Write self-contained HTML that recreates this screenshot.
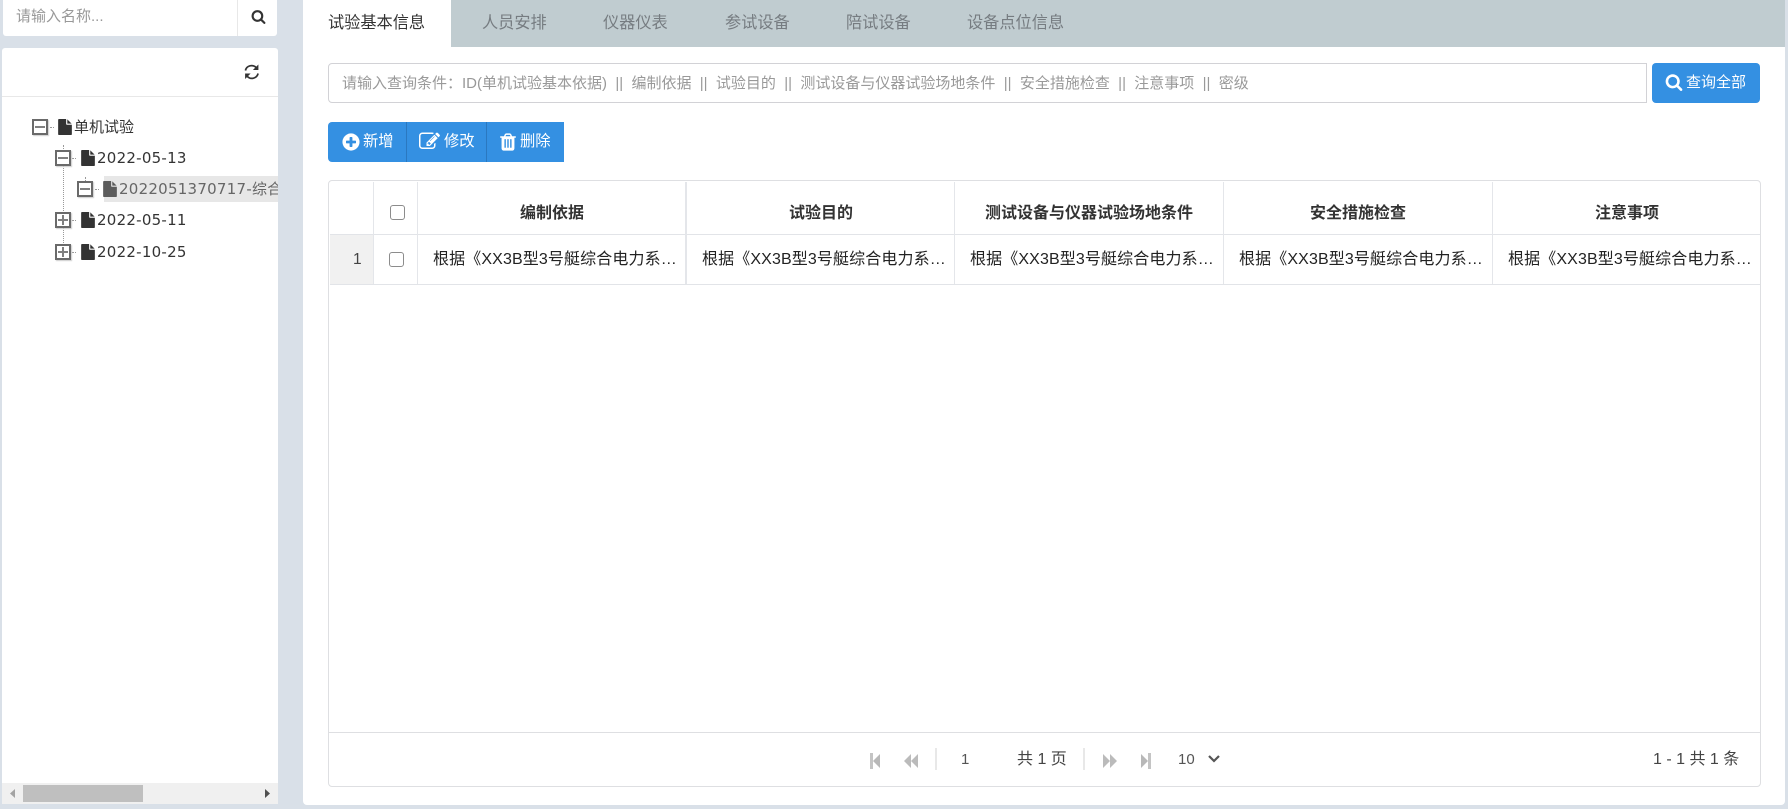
<!DOCTYPE html>
<html><head><meta charset="utf-8"><style>
*{box-sizing:border-box}
html,body{margin:0;padding:0;width:1788px;height:809px;overflow:hidden;background:#d9e0e8;font:15px "Liberation Sans","Noto Sans CJK SC",sans-serif;color:#333}
.a{position:absolute;white-space:nowrap}
svg{position:absolute;display:block}
.th{position:absolute;top:182px;height:52px;line-height:64px;text-align:center;font-size:16px;font-weight:bold;color:#333;width:268px;overflow:hidden}
.td{position:absolute;top:234px;height:50px;line-height:52px;font-size:16px;letter-spacing:.12px;color:#222;width:245px;overflow:hidden;text-overflow:ellipsis;white-space:nowrap}
.v{position:absolute;background:#e4e6ea;width:1px}
.tree{font-family:"DejaVu Sans","Noto Sans CJK SC",sans-serif;font-size:15px;color:#333;line-height:20px;letter-spacing:.25px}
.box{position:absolute;width:16px;height:16px;border:2px solid #6a6a6a;background:#fff;box-shadow:1px 1px 1px #ccc}
.box i{position:absolute;left:1px;top:5px;width:10px;height:2px;background:#808080}
.box b{position:absolute;left:5px;top:1px;width:2px;height:10px;background:#808080}
.dv{position:absolute;width:0;border-left:1px dotted #999}
.dh{position:absolute;height:0;width:4px;border-top:1px dotted #999}
.tab{position:absolute;top:11px;font-size:16.2px;line-height:24px;color:#767c81}
</style></head><body>

<!-- left search -->
<div class="a" style="left:3px;top:-4px;width:274px;height:40px;background:#fff;border-radius:3px"></div>
<div class="a" style="left:237px;top:0;width:1px;height:36px;background:#e8e8e8"></div>
<div class="a" style="left:16px;top:6px;font-size:15px;line-height:22px;color:#999">请输入名称...</div>
<svg style="left:251px;top:9px" width="15" height="15" viewBox="0 0 1792 1792"><path fill="#333" d="M1216 832q0-185-131.500-316.500t-316.500-131.500-316.500 131.500-131.500 316.500 131.500 316.500 316.500 131.500 316.500-131.500 131.500-316.500zm512 832q0 52-38 90t-90 38q-54 0-90-38l-343-342q-179 124-399 124-143 0-273.500-55.500t-225-150-150-225-55.500-273.500 55.500-273.500 150-225 225-150 273.500-55.500 273.500 55.500 225 150 150 225 55.500 273.500q0 220-124 399l343 343q37 37 37 90z"/></svg>

<!-- left panel -->
<div class="a" style="left:2px;top:48px;width:276px;height:756px;background:#fff;border-radius:3px 3px 0 0"></div>
<div class="a" style="left:2px;top:96px;width:276px;height:1px;background:#e8e8e8"></div>
<svg style="left:243px;top:62px" width="18" height="19" viewBox="0 0 18 19"><path fill="none" stroke="#333" stroke-width="1.700" d="M2.400 8.500A6.400 6.400 0 0 1 13.300 5.700M15.100 11.500A6.400 6.400 0 0 1 4.200 14.300"/><path fill="#333" d="M15.400 2.500v5.500h-5.500zM2.100 17v-5.500h5.500z"/></svg>

<!-- tree -->
<div class="a" style="left:104px;top:176px;width:174px;height:26px;background:#e7e7e7"></div>
<div class="dv" style="left:63px;top:145px;height:100px"></div>
<div class="dv" style="left:85px;top:177px;height:4px"></div>
<div class="dh" style="left:50px;top:127px"></div>
<div class="dh" style="left:72px;top:158px"></div>
<div class="dh" style="left:95px;top:189px"></div>
<div class="dh" style="left:72px;top:220px"></div>
<div class="dh" style="left:72px;top:252px"></div>

<div class="box" style="left:32px;top:119px"><i></i></div>
<div class="box" style="left:55px;top:150px"><i></i></div>
<div class="box" style="left:77px;top:181px"><i></i></div>
<div class="box" style="left:55px;top:212px"><i></i><b></b></div>
<div class="box" style="left:55px;top:244px"><i></i><b></b></div>

<svg style="left:57px;top:119px" width="16" height="16" viewBox="0 0 1792 1792"><path fill="#333" d="M1152 512v-472q22 14 36 28l408 408q14 14 28 36h-472zm-128 32q0 40 28 68t68 28h544v1056q0 40-28 68t-68 28h-1344q-40 0-68-28t-28-68v-1600q0-40 28-68t68-28h800v544z"/></svg>
<svg style="left:80px;top:150px" width="16" height="16" viewBox="0 0 1792 1792"><path fill="#333" d="M1152 512v-472q22 14 36 28l408 408q14 14 28 36h-472zm-128 32q0 40 28 68t68 28h544v1056q0 40-28 68t-68 28h-1344q-40 0-68-28t-28-68v-1600q0-40 28-68t68-28h800v544z"/></svg>
<svg style="left:102px;top:181px" width="16" height="16" viewBox="0 0 1792 1792"><path fill="#5c5c5c" d="M1152 512v-472q22 14 36 28l408 408q14 14 28 36h-472zm-128 32q0 40 28 68t68 28h544v1056q0 40-28 68t-68 28h-1344q-40 0-68-28t-28-68v-1600q0-40 28-68t68-28h800v544z"/></svg>
<svg style="left:80px;top:212px" width="16" height="16" viewBox="0 0 1792 1792"><path fill="#333" d="M1152 512v-472q22 14 36 28l408 408q14 14 28 36h-472zm-128 32q0 40 28 68t68 28h544v1056q0 40-28 68t-68 28h-1344q-40 0-68-28t-28-68v-1600q0-40 28-68t68-28h800v544z"/></svg>
<svg style="left:80px;top:244px" width="16" height="16" viewBox="0 0 1792 1792"><path fill="#333" d="M1152 512v-472q22 14 36 28l408 408q14 14 28 36h-472zm-128 32q0 40 28 68t68 28h544v1056q0 40-28 68t-68 28h-1344q-40 0-68-28t-28-68v-1600q0-40 28-68t68-28h800v544z"/></svg>

<div class="a tree" style="left:74px;top:117px;letter-spacing:0">单机试验</div>
<div class="a tree" style="left:97px;top:148px">2022-05-13</div>
<div class="a tree" style="left:119px;top:179px;width:159px;overflow:hidden;color:#666">2022051370717-综合电力系统</div>
<div class="a tree" style="left:97px;top:210px">2022-05-11</div>
<div class="a tree" style="left:97px;top:242px">2022-10-25</div>

<!-- scrollbar -->
<div class="a" style="left:2px;top:783px;width:276px;height:21px;background:#f0f0f0"></div>
<div class="a" style="left:23px;top:785px;width:120px;height:17px;background:#bfbfbf"></div>
<svg style="left:9px;top:788px" width="8" height="11"><path fill="#a3a3a3" d="M6 1v9L1 5.500z"/></svg>
<svg style="left:264px;top:788px" width="8" height="11"><path fill="#505050" d="M1 1v9l5-4.500z"/></svg>

<!-- right panel -->
<div class="a" style="left:303px;top:0;width:1482px;height:805px;background:#fff;border-radius:0 0 4px 4px"></div>
<div class="a" style="left:451px;top:0;width:1334px;height:47px;background:#c0ccd0"></div>
<div class="tab" style="left:328px;color:#333">试验基本信息</div>
<div class="tab" style="left:482px">人员安排</div>
<div class="tab" style="left:603px">仪器仪表</div>
<div class="tab" style="left:725px">参试设备</div>
<div class="tab" style="left:846px">陪试设备</div>
<div class="tab" style="left:967px">设备点位信息</div>

<!-- search -->
<div class="a" style="left:328px;top:63px;width:1319px;height:40px;border:1px solid #d2d2d6;border-radius:4px 0 0 4px"></div>
<div class="a" style="left:342px;top:72px;line-height:24px;font-size:15px;color:#999">请输入查询条件：ID(单机试验基本依据)&nbsp;&nbsp;||&nbsp;&nbsp;编制依据&nbsp;&nbsp;||&nbsp;&nbsp;试验目的&nbsp;&nbsp;||&nbsp;&nbsp;测试设备与仪器试验场地条件&nbsp;&nbsp;||&nbsp;&nbsp;安全措施检查&nbsp;&nbsp;||&nbsp;&nbsp;注意事项&nbsp;&nbsp;||&nbsp;&nbsp;密级</div>
<div class="a" style="left:1652px;top:63px;width:108px;height:40px;background:#3490e2;border-radius:4px"></div>
<svg style="left:1665px;top:73px" width="18" height="18" viewBox="0 0 1792 1792"><path fill="#fff" d="M1216 832q0-185-131.500-316.500t-316.500-131.500-316.500 131.500-131.500 316.500 131.500 316.500 316.500 131.500 316.500-131.500 131.500-316.500zm512 832q0 52-38 90t-90 38q-54 0-90-38l-343-342q-179 124-399 124-143 0-273.500-55.500t-225-150-150-225-55.500-273.500 55.500-273.500 150-225 225-150 273.500-55.500 273.500 55.500 225 150 150 225 55.500 273.500q0 220-124 399l343 343q37 37 37 90z"/></svg>
<div class="a" style="left:1686px;top:71px;line-height:24px;color:#fff">查询全部</div>

<!-- toolbar -->
<div class="a" style="left:328px;top:122px;width:236px;height:40px;background:#3490e2;border-radius:4px 0 0 4px"></div>
<div class="a" style="left:406px;top:122px;width:1px;height:40px;background:#2a78c0"></div>
<div class="a" style="left:486px;top:122px;width:1px;height:40px;background:#2a78c0"></div>
<svg style="left:341px;top:132px" width="20" height="20" viewBox="0 0 1792 1792"><path fill="#fff" d="M1344 960v-128q0-26-19-45t-45-19h-256v-256q0-26-19-45t-45-19h-128q-26 0-45 19t-19 45v256h-256q-26 0-45 19t-19 45v128q0 26 19 45t45 19h256v256q0 26 19 45t45 19h128q26 0 45-19t19-45v-256h256q26 0 45-19t19-45zm320-64q0 209-103 385.500t-279.500 279.500-385.500 103-385.500-103-279.500-279.500-103-385.500 103-385.500 279.500-279.500 385.500-103 385.500 103 279.500 279.500 103 385.500z"/></svg>
<div class="a" style="left:363px;top:130px;line-height:24px;font-size:15.300px;color:#fff">新增</div>
<svg style="left:419px;top:131px" width="21" height="21" viewBox="0 0 1792 1792"><path fill="#fff" d="M888 1184l116-116-152-152-116 116v56h96v96h56zm440-720q-16-16-33 1l-350 350q-17 17-1 33t33-1l350-350q17-17 1-33zm80 594v190q0 119-84.500 203.500t-203.500 84.500h-832q-119 0-203.500-84.500t-84.500-203.500v-832q0-119 84.500-203.500t203.500-84.500h832q63 0 117 25 15 7 18 23 3 17-9 29l-49 49q-14 14-32 8-23-6-45-6h-832q-66 0-113 47t-47 113v832q0 66 47 113t113 47h832q66 0 113-47t47-113v-126q0-13 9-22l64-64q15-15 35-7t20 29zm-96-738l288 288-672 672h-288v-288zm444 132l-92 92-288-288 92-92q28-28 68-28t68 28l152 152q28 28 28 68t-28 68z"/></svg>
<div class="a" style="left:444px;top:130px;line-height:24px;font-size:15.300px;color:#fff">修改</div>
<svg style="left:498px;top:132px" width="20" height="20" viewBox="0 0 1792 1792"><path fill="#fff" d="M704 1376v-704q0-14-9-23t-23-9h-64q-14 0-23 9t-9 23v704q0 14 9 23t23 9h64q14 0 23-9t9-23zm256 0v-704q0-14-9-23t-23-9h-64q-14 0-23 9t-9 23v704q0 14 9 23t23 9h64q14 0 23-9t9-23zm256 0v-704q0-14-9-23t-23-9h-64q-14 0-23 9t-9 23v704q0 14 9 23t23 9h64q14 0 23-9t9-23zm-544-992h448l-48-117q-7-9-17-11h-317q-10 2-17 11zm928 32v64q0 14-9 23t-23 9h-96v948q0 83-47 143.500t-113 60.500h-832q-66 0-113-58.500t-47-141.500v-952h-96q-14 0-23-9t-9-23v-64q0-14 9-23t23-9h309l70-167q15-37 54-63t79-26h320q40 0 79 26t54 63l70 167h309q14 0 23 9t9 23z"/></svg>
<div class="a" style="left:520px;top:130px;line-height:24px;font-size:15.300px;color:#fff">删除</div>

<!-- table -->
<div class="a" style="left:328px;top:180px;width:1433px;height:607px;border:1px solid #dedfe2;border-radius:4px"></div>
<div class="a" style="left:330px;top:234px;width:43px;height:50px;background:#f1f1f1"></div>
<div class="a" style="left:330px;top:234px;width:1430px;height:1px;background:#e2e4e8"></div>
<div class="a" style="left:330px;top:284px;width:1430px;height:1px;background:#e2e4e8"></div>
<div class="a" style="left:329px;top:732px;width:1431px;height:1px;background:#dedfe2"></div>
<div class="v" style="left:373px;top:182px;height:102px"></div>
<div class="v" style="left:417px;top:182px;height:102px"></div>
<div class="v" style="left:685px;top:182px;height:102px;width:2px"></div>
<div class="v" style="left:954px;top:182px;height:102px"></div>
<div class="v" style="left:1223px;top:182px;height:102px"></div>
<div class="v" style="left:1492px;top:182px;height:102px"></div>

<div class="th" style="left:418px">编制依据</div>
<div class="th" style="left:687px">试验目的</div>
<div class="th" style="left:955px">测试设备与仪器试验场地条件</div>
<div class="th" style="left:1224px">安全措施检查</div>
<div class="th" style="left:1493px">注意事项</div>

<div class="a" style="left:390px;top:205px;width:15px;height:15px;border:1.500px solid #8c8c8c;border-radius:3px;background:#fff"></div>
<div class="a" style="left:389px;top:252px;width:15px;height:15px;border:1.500px solid #8c8c8c;border-radius:3px;background:#fff"></div>
<div class="a" style="left:353px;top:249px;line-height:22px;font-size:15.500px;color:#444">1</div>
<div class="td" style="left:433px">根据《XX3B型3号艇综合电力系统单机试验</div>
<div class="td" style="left:702px">根据《XX3B型3号艇综合电力系统单机试验</div>
<div class="td" style="left:970px">根据《XX3B型3号艇综合电力系统单机试验</div>
<div class="td" style="left:1239px">根据《XX3B型3号艇综合电力系统单机试验</div>
<div class="td" style="left:1508px">根据《XX3B型3号艇综合电力系统单机试验</div>

<!-- pager -->
<svg style="left:870px;top:753px" width="11" height="16"><path fill="#c4c4c4" d="M0 0h3v16H0z"/><path fill="#b8b8b8" d="M3 8L10 1v14z"/></svg>
<svg style="left:904px;top:753px" width="15" height="16"><path fill="#bbb" d="M0 8L7 1v14zM7 8L14 1v14z"/></svg>
<div class="a" style="left:935px;top:748px;width:2px;height:22px;background:#e8e8e8"></div>
<div class="a" style="left:961px;top:749px;line-height:22px;font-size:15px;color:#555">1</div>
<div class="a" style="left:1017px;top:749px;line-height:22px;font-size:16px;color:#444">共 1 页</div>
<div class="a" style="left:1083px;top:748px;width:2px;height:22px;background:#e8e8e8"></div>
<svg style="left:1103px;top:753px" width="15" height="16"><path fill="#bbb" d="M0 1l7 7-7 7zM7 1l7 7-7 7z"/></svg>
<svg style="left:1140px;top:753px" width="11" height="16"><path fill="#b8b8b8" d="M1 1l7 7-7 7z"/><path fill="#c4c4c4" d="M8 0h3v16H8z"/></svg>
<div class="a" style="left:1178px;top:749px;line-height:22px;font-size:15px;color:#555">10</div>
<svg style="left:1207px;top:754px" width="14" height="10"><path fill="none" stroke="#555" stroke-width="2.200" d="M2 2l5 5 5-5"/></svg>
<div class="a" style="left:1653px;top:749px;line-height:22px;font-size:16px;color:#444">1 - 1 共 1 条</div>

</body></html>
